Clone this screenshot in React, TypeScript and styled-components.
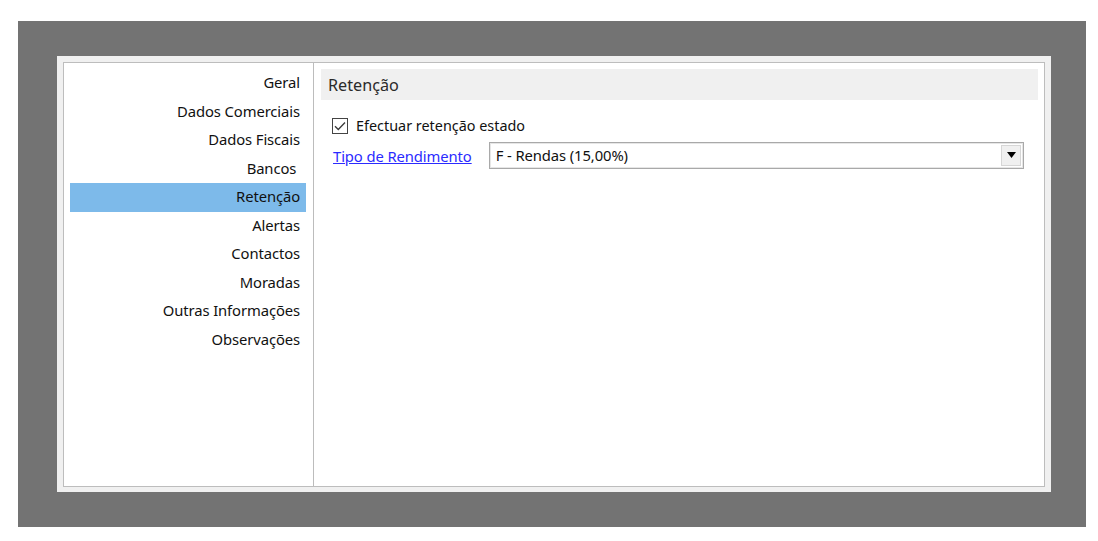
import React, { useState } from "react";
import styled, { createGlobalStyle } from "styled-components";

const menuItems = [
  "Geral",
  "Dados Comerciais",
  "Dados Fiscais",
  "Bancos\u00a0",
  "Retenção",
  "Alertas",
  "Contactos",
  "Moradas",
  "Outras Informações",
  "Observações",
];

export default function App() {
  const [active, setActive] = useState(4);
  const [checked, setChecked] = useState(true);

  return (
    <>
      <GlobalStyle />
      <Backdrop>
        <Frame>
          <Panel>
            <Sidebar>
              {menuItems.map((item, i) => (
                <MenuItem
                  key={item}
                  $active={i === active}
                  onClick={() => setActive(i)}
                >
                  {item}
                </MenuItem>
              ))}
            </Sidebar>

            <Content>
              <SectionHeader>Retenção</SectionHeader>

              <CheckRow onClick={() => setChecked(!checked)}>
                <CheckBox>
                  {checked && (
                    <svg width="12" height="10" viewBox="0 0 12 10">
                      <path
                        d="M1 5.2 L4.3 8.5 L11 1.5"
                        fill="none"
                        stroke="#3a3a3a"
                        strokeWidth="1.3"
                      />
                    </svg>
                  )}
                </CheckBox>
                <span>Efectuar retenção estado</span>
              </CheckRow>

              <FieldRow>
                <FieldLink>Tipo de Rendimento</FieldLink>
                <Combo>
                  <ComboText>F - Rendas (15,00%)</ComboText>
                  <ComboButton>
                    <svg width="9" height="6" viewBox="0 0 9 6">
                      <path d="M0 0 H9 L4.5 6 Z" fill="#000" />
                    </svg>
                  </ComboButton>
                </Combo>
              </FieldRow>
            </Content>
          </Panel>
        </Frame>
      </Backdrop>
    </>
  );
}

const GlobalStyle = createGlobalStyle`
  body {
    margin: 0;
    background: #fff;
    font-family: "Noto Sans", "Open Sans", sans-serif;
    color: #111;
  }
`;

const Backdrop = styled.div`
  margin: 21px 0 0 18px;
  width: 1068px;
  height: 506px;
  box-sizing: border-box;
  padding: 35px 35px 35px 39px;
  background-color: #737373;
`;

const Frame = styled.div`
  width: 994px;
  height: 436px;
  box-sizing: border-box;
  padding: 6px 6px 5px 6px;
  background-color: #f0f0f0;
`;

const Panel = styled.div`
  display: flex;
  height: 100%;
  box-sizing: border-box;
  border: 1px solid #bdbdbd;
  background-color: #fff;
`;

const Sidebar = styled.div`
  width: 249px;
  padding-top: 6px;
  border-right: 1px solid #bcbcbc;
  display: flex;
  flex-direction: column;
`;

const MenuItem = styled.div<{ $active: boolean }>`
  height: 28.5px;
  box-sizing: border-box;
  margin: 0 7px 0 6px;
  padding: 0 6px 2px 0;
  display: flex;
  align-items: center;
  justify-content: flex-end;
  font-size: 14.8px;
  letter-spacing: -0.1px;
  white-space: pre;
  color: #111;
  cursor: pointer;
  background-color: ${(p) => (p.$active ? "#7dbaea" : "transparent")};
`;

const Content = styled.div`
  flex: 1;
  display: flex;
  flex-direction: column;
`;

const SectionHeader = styled.div`
  margin: 6px 6px 0 7px;
  height: 31px;
  padding-left: 7px;
  display: flex;
  align-items: center;
  background-color: #f0f0f0;
  font-size: 16.2px;
  color: #2a2a2a;
`;

const CheckRow = styled.label`
  margin: 16px 0 0 18px;
  display: flex;
  align-items: center;
  gap: 8px;
  font-size: 14.4px;
  color: #111;
  cursor: pointer;
`;

const CheckBox = styled.span`
  width: 14px;
  height: 14px;
  border: 1px solid #444;
  display: flex;
  align-items: center;
  justify-content: center;
  background-color: #fff;
`;

const FieldRow = styled.div`
  margin: 7px 20px 0 19px;
  display: flex;
  align-items: center;
  gap: 17px;
`;

const FieldLink = styled.a`
  font-size: 14.8px;
  letter-spacing: -0.1px;
  color: #2b2bff;
  text-decoration: underline;
  cursor: pointer;
`;

const Combo = styled.div`
  flex: 1;
  height: 27px;
  box-sizing: border-box;
  border: 1px solid #a9a9a9;
  box-shadow: inset 0 0 0 1px #e6e6e6;
  display: flex;
  align-items: center;
  padding: 0 2px 1px 6px;
`;

const ComboText = styled.span`
  flex: 1;
  font-size: 14.8px;
  letter-spacing: -0.1px;
  color: #111;
`;

const ComboButton = styled.span`
  width: 20px;
  height: 21px;
  box-sizing: border-box;
  border: 1px solid #d6d6d6;
  background-color: #f0f0f0;
  display: flex;
  align-items: center;
  justify-content: center;
`;
